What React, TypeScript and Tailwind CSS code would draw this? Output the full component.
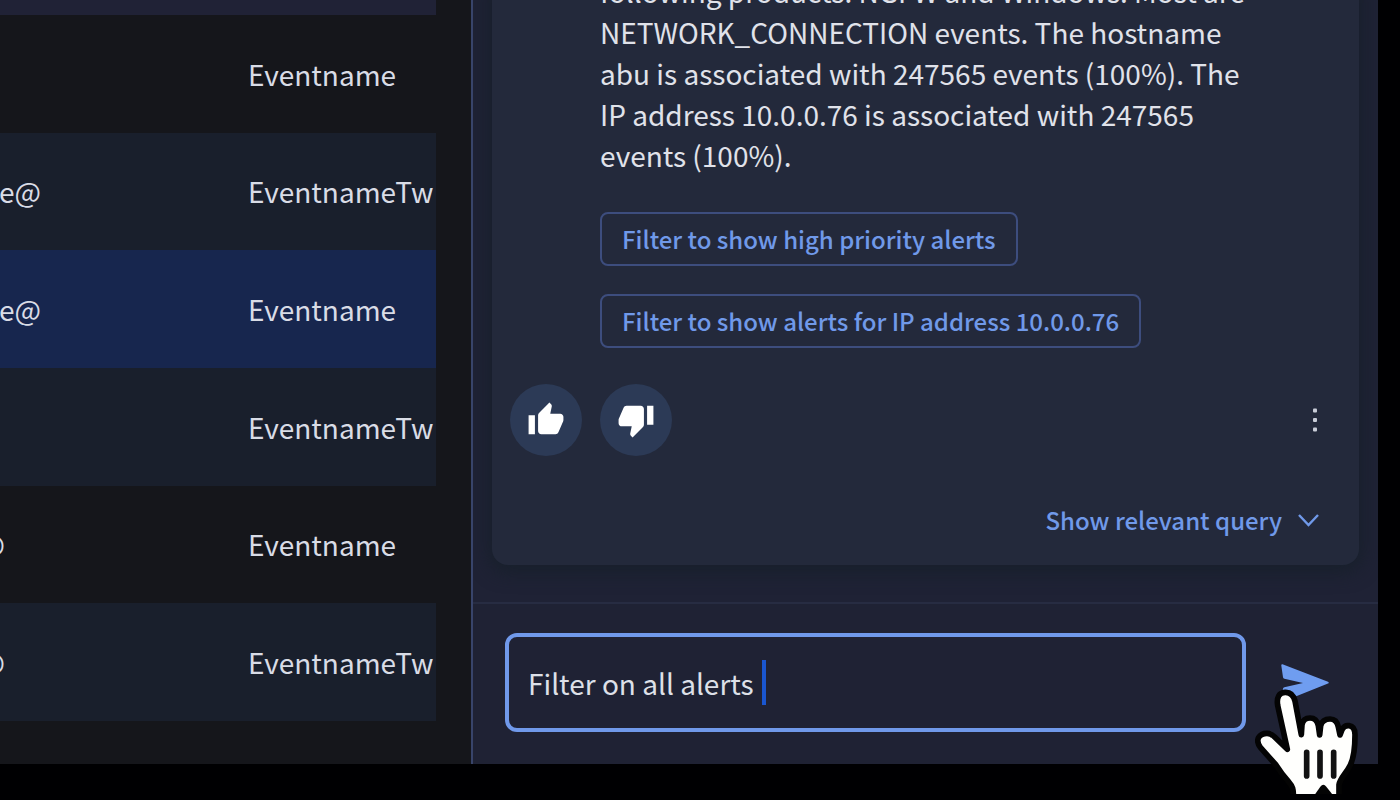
import { MdThumbDown, MdThumbUp } from "react-icons/md";

type Row = { user: string; cut: "near" | "far"; name: string; tone: string };

const rows: Row[] = [
  { user: "", cut: "near", name: "Eventname", tone: "" },
  { user: "e@", cut: "near", name: "EventnameTw", tone: "bg-[#191f2c]" },
  { user: "e@", cut: "near", name: "Eventname", tone: "bg-[#17264e]" },
  { user: "", cut: "near", name: "EventnameTw", tone: "bg-[#191f2c]" },
  { user: "@", cut: "far", name: "Eventname", tone: "" },
  { user: "@", cut: "far", name: "EventnameTw", tone: "bg-[#191f2c]" },
];

const suggestions = [
  "Filter to show high priority alerts",
  "Filter to show alerts for IP address 10.0.0.76",
];

function EventTable() {
  return (
    <table className="h-[721px] w-full table-fixed border-collapse text-[28px] leading-[40px] text-[#d9dce6]">
      <thead>
        <tr className="h-[15px] bg-[#202236]">
          <th className="w-[213px] p-0" aria-label="User" />
          <th className="p-0" aria-label="Event" />
        </tr>
      </thead>
      <tbody>
        {rows.map((row, i) => (
          <tr key={i} className={row.tone}>
            <td className="p-0">
              <div
                className={
                  row.cut === "near"
                    ? "flex w-[41px] justify-end overflow-hidden"
                    : "flex w-[5px] justify-end overflow-hidden"
                }
              >
                {row.user}
              </div>
            </td>
            <td className="overflow-hidden p-0 pl-[35px] whitespace-nowrap">{row.name}</td>
          </tr>
        ))}
      </tbody>
    </table>
  );
}

function SendIcon() {
  return (
    <svg width="48" height="38" viewBox="0 0 48 38" fill="#6f9df0" aria-hidden="true">
      <path d="M1.5 0.3 L47 17.8 Q48.5 18.8 47 19.6 L1.5 37.7 Q0.2 38 0.4 36.6 L2 24.5 Q2.2 23.4 3.4 23.2 L22 19 L3.4 14.8 Q2.2 14.5 2 13.2 L0.3 1.5 Q0.2 0 1.5 0.3 Z" />
    </svg>
  );
}

function HandPointer() {
  return (
    <svg
      className="pointer-events-none absolute top-6 -left-[26px]"
      width="103"
      height="106"
      viewBox="105 205 309 318"
      aria-hidden="true"
    >
      <path
        d="M220 535 C221 508 218 500 205 485 C190 468 180 455 168 436 L121 383 C104 360 118 341 141 341 C152 341 158 346 164 352 L202 389 L173 257 C169 232 178 219 195 218 C212 217 221 228 225 244 L244 345 L246 315 C249 300 259 295 270 295 C285 295 292 304 295 318 L299 346 L302 318 C306 303 316 298 330 298 C345 298 352 306 355 322 L360 346 L366 330 C371 320 379 317 387 318 C402 320 405 332 405 345 C405 390 402 413 391 436 C379 461 361 474 357 495 L357 535"
        fill="#fffffd"
        stroke="#040404"
        strokeWidth="17"
        strokeLinecap="round"
        strokeLinejoin="round"
      />
      <path d="M285 524 L301 501 Q310 490 319 501 L337 524 Z" fill="#040404" />
      <path
        d="M260 398 V469 M300 398 V469 M341 398 V469"
        stroke="#121212"
        strokeWidth="17"
        strokeLinecap="round"
      />
    </svg>
  );
}

function AnswerCard() {
  return (
    <article className="shrink-0 rounded-2xl bg-[#23293b] px-[18px] pb-[22px] shadow-[0_4px_18px_4px_#18202c]">
      <div className="pr-20 pl-[90px]">
        <p className="text-[28px] leading-[41px] text-[#e0e2ea]">
          following products: NGFW and Windows. Most are
          <br />
          NETWORK_CONNECTION events. The hostname
          <br />
          abu is associated with 247565 events (100%). The
          <br />
          IP address 10.0.0.76 is associated with 247565
          <br />
          events (100%).
        </p>
        <div className="mt-9 flex flex-col items-start gap-7">
          {suggestions.map((label) => (
            <button
              key={label}
              type="button"
              className="h-[54px] rounded-lg border-2 border-[#3d4d7e] px-5 pb-px text-[24px] font-medium whitespace-nowrap text-[#7099e9]"
            >
              {label}
            </button>
          ))}
        </div>
      </div>

      <div className="mt-9 flex items-center gap-[18px]">
        <button
          type="button"
          aria-label="Good answer"
          className="flex size-[72px] items-center justify-center rounded-full bg-[#2c3a56] text-white"
        >
          <MdThumbUp size={38} />
        </button>
        <button
          type="button"
          aria-label="Bad answer"
          className="flex size-[72px] items-center justify-center rounded-full bg-[#2c3a56] text-white"
        >
          <MdThumbDown size={38} />
        </button>
        <button type="button" aria-label="More options" className="mr-4 ml-auto flex h-10 w-5 items-center justify-center">
          <svg width="4" height="24" viewBox="0 0 4 24" fill="#c9cdd8" aria-hidden="true">
            <rect y="0.5" width="4" height="4" rx="1" />
            <rect y="10" width="4" height="4" rx="1" />
            <rect y="19.5" width="4" height="4" rx="1" />
          </svg>
        </button>
      </div>

      <div className="mt-[42px] flex justify-end pr-[22px] pb-px">
        <button type="button" className="flex h-11 items-center gap-4 text-[24px] font-medium text-[#7099e9]">
          Show relevant query
          <svg width="21" height="13" viewBox="0 0 21 13" fill="none" stroke="#7099e9" strokeWidth="2.4" aria-hidden="true">
            <path d="M1 1 L10.5 11 L20 1" />
          </svg>
        </button>
      </div>
    </article>
  );
}

function Composer() {
  return (
    <form
      className="flex items-center gap-[35px] border-t-2 border-[#272c42] bg-[#1f2234] pt-[29px] pr-[49px] pb-8 pl-8"
      onSubmit={(e) => e.preventDefault()}
    >
      <label className="flex h-[99px] min-w-0 flex-1 cursor-text items-center gap-2 rounded-xl border-4 border-[#7099ea] px-[19px]">
        <input
          aria-label="Message"
          defaultValue="Filter on all alerts"
          className="field-sizing-content min-w-0 bg-transparent text-[28px] leading-[40px] text-[#dde0e8] outline-none"
        />
        <span className="h-[45px] w-1 bg-[#1a56cf]" />
      </label>
      <div className="relative flex">
        <button type="submit" aria-label="Send" className="block">
          <SendIcon />
        </button>
        <HandPointer />
      </div>
    </form>
  );
}

export default function App() {
  return (
    <div className="h-screen overflow-hidden bg-[#000002] pr-[22px] pb-9 font-['Noto_Sans_CJK_SC','Noto_Sans',sans-serif]">
      <div className="flex h-full bg-[#15161b]">
        <main className="w-[471px] shrink-0 pr-[35px]">
          <EventTable />
        </main>
        <aside className="flex min-w-0 flex-1 flex-col border-l-2 border-[#38446a] bg-[#1f2235]">
          <section className="flex min-h-0 flex-1 flex-col justify-end overflow-hidden pr-[19px] pb-[37px] pl-[19px]">
            <AnswerCard />
          </section>
          <Composer />
        </aside>
      </div>
    </div>
  );
}
